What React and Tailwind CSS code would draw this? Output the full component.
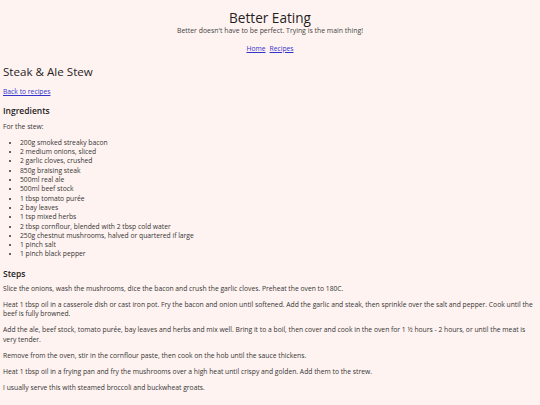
const ingredients = [
  '200g smoked streaky bacon',
  '2 medium onions, sliced',
  '2 garlic cloves, crushed',
  '850g braising steak',
  '500ml real ale',
  '500ml beef stock',
  '1 tbsp tomato purée',
  '2 bay leaves',
  '1 tsp mixed herbs',
  '2 tbsp cornflour, blended with 2 tbsp cold water',
  '250g chestnut mushrooms, halved or quartered if large',
  '1 pinch salt',
  '1 pinch black pepper',
]

const steps = [
  'Slice the onions, wash the mushrooms, dice the bacon and crush the garlic cloves. Preheat the oven to 180C.',
  'Heat 1 tbsp oil in a casserole dish or cast iron pot. Fry the bacon and onion until softened. Add the garlic and steak, then sprinkle over the salt and pepper. Cook until the beef is fully browned.',
  'Add the ale, beef stock, tomato purée, bay leaves and herbs and mix well. Bring it to a boil, then cover and cook in the oven for 1 ½ hours - 2 hours, or until the meat is very tender.',
  'Remove from the oven, stir in the cornflour paste, then cook on the hob until the sauce thickens.',
  'Heat 1 tbsp oil in a frying pan and fry the mushrooms over a high heat until crispy and golden. Add them to the strew.',
  'I usually serve this with steamed broccoli and buckwheat groats.',
]

export default function App() {
  return (
    <div className="min-h-[405px] bg-[#fff3f1] text-[#333] font-['Open_Sans',sans-serif] text-[6.75px] leading-[9.3px] px-[3px]">
      {/* header */}
      <header className="text-center pt-[8px]">
        <h1 className="text-[13.6px] leading-[19px] font-medium text-[#1f1f1f]">Better Eating</h1>
        <p className="text-[6.9px] leading-[8px] text-[#444]">Better doesn't have to be perfect. Trying is the main thing!</p>
        <nav className="mt-[9px] flex justify-center gap-[4px]">
          <a href="#" className="underline text-[#3333cc]">Home</a>
          <a href="#" className="underline text-[#3333cc]">Recipes</a>
        </nav>
      </header>

      <main>
        <h2 className="mt-[12px] text-[11.6px] leading-[14px] font-medium text-[#1f1f1f]">Steak &amp; Ale Stew</h2>
        <p className="mt-[8px]">
          <a href="#" className="underline text-[#3333cc]">Back to recipes</a>
        </p>

        <h3 className="mt-[8px] text-[8.5px] leading-[11px] font-semibold text-[#222]">Ingredients</h3>
        <p className="mt-[6px]">For the stew:</p>
        <ul className="mt-[7px] list-disc pl-[17px]">
          {ingredients.map(item => (
            <li key={item}>{item}</li>
          ))}
        </ul>

        <h3 className="mt-[9px] text-[8.5px] leading-[11px] font-semibold text-[#222]">Steps</h3>
        <div className="mt-[5px] flex flex-col gap-[6.8px]">
          {steps.map(s => (
            <p key={s}>{s}</p>
          ))}
        </div>
      </main>
    </div>
  )
}
